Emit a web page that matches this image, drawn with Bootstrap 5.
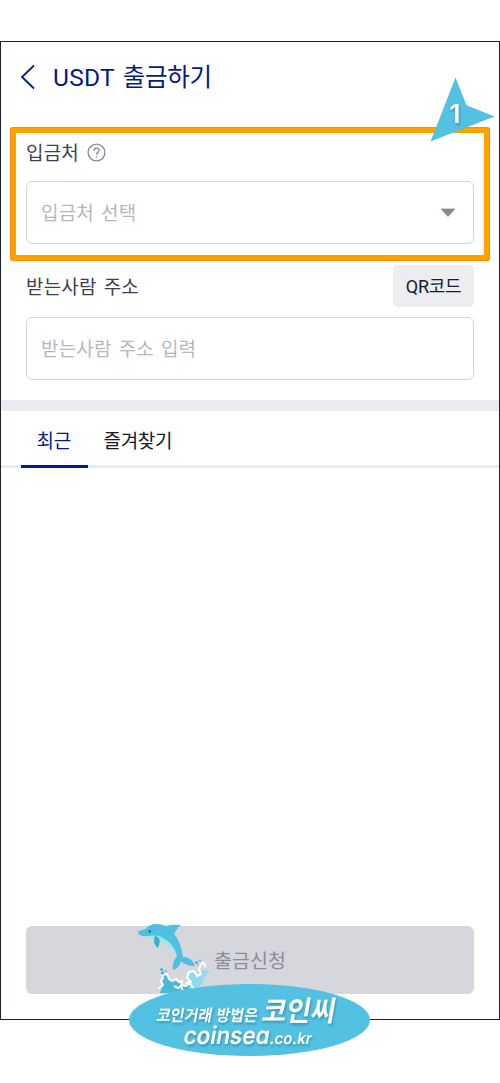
<!DOCTYPE html>
<html lang="ko">
<head>
<meta charset="utf-8">
<meta name="viewport" content="width=device-width, initial-scale=1">
<title>USDT 출금하기</title>
<link href="https://cdn.jsdelivr.net/npm/bootstrap@5.3.0/dist/css/bootstrap.min.css" rel="stylesheet">
<style>
  body { font-family: Roboto, "Noto Sans CJK KR", sans-serif; background: #fff; color: #3b4152; height: 1083px; overflow: hidden; }
  .screen { margin-top: 41px; height: 979px; border: 1px solid #1d212c; }
  .topbar { height: 85px; padding: 0 19px 15px; color: #001b8b; }
  .topbar h1 { font-size: 24.5px; font-weight: 400; line-height: 36px; margin: 2px 0 0 17px; letter-spacing: -.3px; word-spacing: 2px; }
  .topbar h1 span { letter-spacing: .3px; }
  .focus-box { height: 134px; margin: 0 9px; border: 6px solid #ffa200; border-radius: 3px; outline: 1px solid #ff8c08; outline-offset: -1px; padding: 5px 10px 0; }
  .field-label { font-size: 19px; line-height: 28px; letter-spacing: .2px; word-spacing: 2px; }
  .field-label span, span.field-label { padding-top: 3px; }
  .field-label span { line-height: 25px; }
  .field { height: 63px; border: 1.5px solid #d3d4d9; border-radius: 6px; padding: 3px 15px 0 14px; font-size: 19px; letter-spacing: .2px; word-spacing: 2px; color: #b5b7bf; background: #fff; }
  .field svg { margin-top: -2px; }
  .address { padding: 4px 25px 0; height: 139px; }
  .qr { width: 81px; height: 42px; padding: 0; border: 0; border-radius: 5px; background: #ecedf1; color: #171d2d; font-size: 18px; letter-spacing: -.3px; }
  .divider { height: 11px; background: #ebecf0; }
  .tabs { height: 57px; padding-left: 20px; border-bottom: 3px solid #ebecf0; }
  .tabs .nav-link { height: 57px; padding: 0 15.5px; color: #171a25; font-size: 19px; line-height: 61px; border-bottom: 3px solid transparent; letter-spacing: -.3px; }
  .tabs .nav-link.active { color: #001b8b; border-color: #001b8b; width: 67px; }
  .submit { height: 68px; margin: 0 25px 25px; padding-top: 4px; border: 0; border-radius: 6px; background: #d6d7dc; color: #8b8e98; font-size: 19.5px; }
  .pin { left: 429px; top: 76px; }
  .brand { left: 120px; top: 910px; }
  .brand text { font-family: "Noto Sans CJK KR", sans-serif; font-weight: 700; fill: #fff; }
  .brand .latin, .pin text { font-family: Inter, sans-serif; font-weight: 600; fill: #fff; font-feature-settings: "cv11", "ss03"; }
  .shade { filter: drop-shadow(1px 2px 1px #247c9c99); }
</style>
</head>
<body class="position-relative">
<main class="screen d-flex flex-column">
  <header class="topbar d-flex align-items-center">
    <svg width="16" height="26" viewBox="0 0 16 26" fill="none" stroke="currentColor" stroke-width="1.8"><path d="M14 1.500 2 13l12 11.500"/></svg>
    <h1><span>USDT</span> 출금하기</h1>
  </header>
  <section class="focus-box">
    <div class="d-flex align-items-center field-label">
      <span>입금처</span>
      <svg class="ms-2" width="19" height="19" viewBox="0 0 19 19" fill="none" stroke="#858894" stroke-width="1.3"><circle cx="9.500" cy="9.500" r="8.400"/><path d="M7 7.700c0-3.500 5.300-3.500 5.100-.2-.1 2-2.600 1.800-2.600 4.200m0 1.500v1.400"/></svg>
    </div>
    <div class="field d-flex align-items-center justify-content-between" style="margin-top:15px">
      <span>입금처 선택</span>
      <svg width="20" height="10" viewBox="0 0 20 10"><path d="M3 1h14l-7 7.500z" fill="#898c98" stroke="#777a86" stroke-width=".6"/></svg>
    </div>
  </section>
  <section class="address">
    <div class="d-flex justify-content-between align-items-center">
      <span class="field-label">받는사람 주소</span>
      <button class="qr btn">QR코드</button>
    </div>
    <div class="field d-flex align-items-center" style="margin-top:10px">받는사람 주소 입력</div>
  </section>
  <div class="divider"></div>
  <nav class="tabs nav flex-nowrap">
    <a class="nav-link active">최근</a>
    <a class="nav-link">즐겨찾기</a>
  </nav>
  <button class="submit mt-auto">출금신청</button>
</main>

<svg class="pin position-absolute" width="68" height="68" viewBox="429 76 68 68">
  <path d="m455.500 77.500 11 27.700 28 11.300-64 25z" fill="#53c1e1"/>
  <text class="shade" x="449.500" y="123" font-size="26">1</text>
</svg>

<svg class="brand position-absolute" width="260" height="160" viewBox="120 910 260 160">
  <path d="m160 993 3-8-2-4 2-3-1-3 5-1 2 5 3 2 4-2 3 3 3-1-1 4 5 1 4-2 3 9z" fill="#49b9d9"/>
  <path d="m188 990 3-8-4-4 2-6 5-1 3 5 4-2-1-4 10 1-5 5-2 6-6 8z" fill="#91d9ef"/>
  <path d="m159 988 4-3-2-4 2-3-1-3 5-1 2 5 3 2 4-2 3 3 3-1-1 4 5 1 4-3 3 5M186 983l5-1-4-4 2-6 5-1 3 5 4-2-2-5 2-5 3-1 1 3" fill="none" stroke="#fff" stroke-width="2" stroke-linejoin="round" stroke-linecap="round"/>
  <path d="m174 986 4 2 3-2 2 5" fill="none" stroke="#fff" stroke-width="2"/>
  <g fill="#49b9d9"><circle cx="161.500" cy="969.500" r="1.600"/><circle cx="162.500" cy="973" r="1.700"/><circle cx="165.500" cy="971" r=".9"/><circle cx="196.500" cy="962.500" r="1.600"/><circle cx="200" cy="960.500" r="1.100"/><circle cx="198" cy="965" r=".8"/></g>
  <path d="M138 931.500q4-1.700 8-2.500c3-6 13-6 20-3q7-2 15-1c-4 3-5 6-7 9 6 7 8 16 9 23 6 0 10 3 12 9-5 0-11-1-14-5-1 5-4 8-8 9-1-6 1-10 4-14-4-10-11-16-20-18l-10-2c-4 1-9-.5-9-4.500z" fill="#50c0e0"/>
  <path d="M147 936c8-1 13-1 18 3 6 4 11 10 12 17-5-8-10-12-18-16q-7 0-12-4z" fill="#92ebe9"/>
  <path d="M155 936c5 1 6 5 3 12-4-3-5-7-3-12z" fill="#3daed3"/>
  <circle cx="149.800" cy="931.500" r="1.200" fill="#245b76"/>
  <ellipse cx="249.500" cy="1020" rx="120.500" ry="36" fill="#53c1e1"/>
  <g class="shade">
    <text transform="translate(156 1021) skewX(-10)" font-size="16" textLength="101" lengthAdjust="spacingAndGlyphs">코인거래 방법은</text>
    <text transform="translate(261 1021) skewX(-10)" font-size="28" textLength="73" lengthAdjust="spacingAndGlyphs">코인씨</text>
    <text class="latin" transform="translate(182.500 1044) skewX(-10)" font-size="24.500" textLength="86" lengthAdjust="spacingAndGlyphs">coinsea</text>
    <text class="latin" transform="translate(269 1044) skewX(-10)" font-size="16" textLength="42" lengthAdjust="spacingAndGlyphs">.co.kr</text>
  </g>
</svg>
<script src="https://cdn.jsdelivr.net/npm/bootstrap@5.3.0/dist/js/bootstrap.bundle.min.js"></script>
</body>
</html>
